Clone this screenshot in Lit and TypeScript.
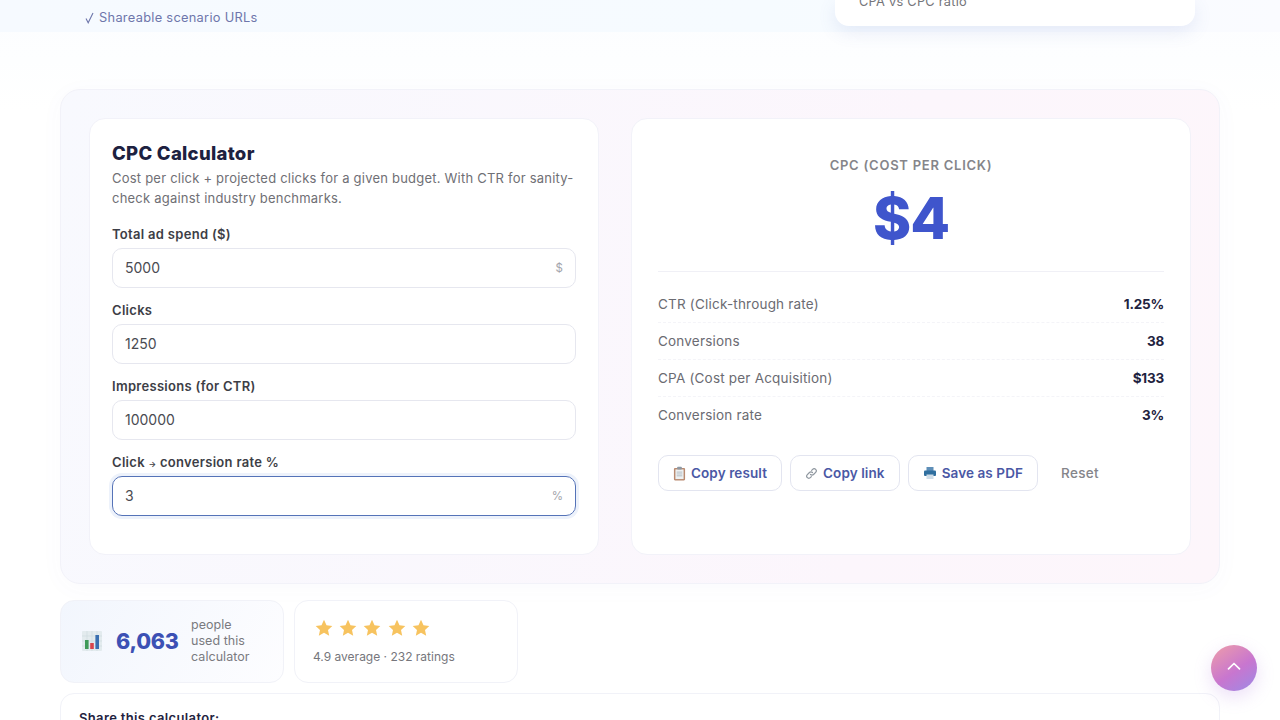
import { LitElement, html, css, svg } from "lit";
import { customElement } from "lit/decorators.js";

const clipboard = html`<svg class="ico" viewBox="0 0 14 16" width="13" height="15"><rect x="1" y="2" width="12" height="13.5" rx="1.2" fill="#b98a70"/><rect x="2.6" y="3.6" width="8.8" height="10.4" fill="#eef1f2"/><path d="M4 6.5h6M4 8.5h6M4 10.5h6" stroke="#a9b4bc" stroke-width=".9"/><rect x="4.5" y="0.6" width="5" height="3" rx=".8" fill="#8d98a2"/></svg>`;
const link = html`<svg class="ico" viewBox="0 0 16 16" width="13" height="13" fill="none" stroke="#8f979f" stroke-width="1.5" stroke-linecap="round"><path d="M6.8 9.2a2.6 2.6 0 0 0 3.7 0l2.6-2.6a2.6 2.6 0 0 0-3.7-3.7L8.2 4.1"/><path d="M9.2 6.8a2.6 2.6 0 0 0-3.7 0L2.9 9.4a2.6 2.6 0 0 0 3.7 3.7l1.2-1.2"/></svg>`;
const printer = html`<svg class="ico" viewBox="0 0 14 14" width="14" height="14"><rect x="3.5" y="1" width="7" height="4" fill="#5f8fb8"/><rect x="1" y="4.5" width="12" height="5.5" rx="1" fill="#2f6f9f"/><rect x="3.5" y="8.5" width="7" height="4.5" fill="#cfdde8"/></svg>`;
const chart = html`<svg viewBox="0 0 20 20" width="20" height="20"><rect width="20" height="20" rx="1" fill="#e3ebee"/><path d="M0 5h20M0 10h20M0 15h20M5 0v20M10 0v20M15 0v20" stroke="#cfdbe0" stroke-width=".7"/><rect x="3" y="9" width="3.6" height="9" fill="#3f9a58"/><rect x="8.2" y="12" width="3.6" height="6" fill="#d8454b"/><rect x="13.4" y="4" width="3.6" height="14" fill="#3a6fb0"/></svg>`;
const starPath = svg`<path d="M9 0.8l2.5 5.4 5.8.7-4.3 4 1.2 5.8L9 13.8 3.8 16.7 5 10.9.7 6.9l5.8-.7z" fill="#f7c35f"/>`;
const star = html`<svg viewBox="0 0 18 18" width="18" height="18">${starPath}</svg>`;
const chevron = html`<svg viewBox="0 0 14 8" width="14" height="8" fill="none" stroke="#fff" stroke-width="1.7" stroke-linecap="round" stroke-linejoin="round"><path d="M1.5 6.8L7 1.5l5.5 5.3"/></svg>`;
const tickMark = html`<svg class="tm" viewBox="0 0 9 12" width="9" height="12" fill="none" stroke="#6e76ab" stroke-width="1.1"><path d="M1 6.4L3.2 10.8L8 1"/></svg>`;

@customElement("app-root")
export class AppRoot extends LitElement {
  static styles = css`
    :host {
      display: block;
      width: 1280px;
      height: 720px;
      overflow: hidden;
      position: relative;
      background: linear-gradient(180deg, #fcfdff 0, #fdfeff 60px, #fff 110px);
      font-family: "Inter", "Noto Sans", sans-serif;
      color: #1f2340;
    }
    .hero {
      height: 32px;
      background: linear-gradient(90deg, #f6faff, #f6fbff 60%, #fafbff);
      display: flex;
      justify-content: space-between;
      padding: 0 85px;
      box-sizing: border-box;
    }
    .tick {
      margin-top: 9px;
      height: 17px;
      display: flex;
      align-items: center;
      gap: 5px;
      font-size: 12.8px;
      line-height: 17px;
      letter-spacing: 0.3px;
      color: #6e76ab;
    }
    .tm { display: block; flex: none; }
    .mini {
      width: 360px;
      height: 26px;
      box-sizing: border-box;
      background: #fff;
      border-radius: 0 0 14px 14px;
      box-shadow: 0 6px 18px rgba(80, 110, 190, 0.12);
      padding-left: 24px;
      overflow: hidden;
      font-size: 12.8px;
      line-height: 17px;
      letter-spacing: 0.25px;
      color: #75757a;
      display: flex;
      align-items: flex-end;
      padding-bottom: 16px;
    }
    .mini span { display: block; }
    .shell {
      margin: 57px 60px 0;
      height: 495px;
      box-sizing: border-box;
      border: 1px solid #f2f2f9;
      border-radius: 20px;
      background: linear-gradient(100deg, #f8f9fe, #fcf6fc 70%, #fdf6fb);
      box-shadow: 0 4px 24px rgba(80, 90, 190, 0.03);
      padding: 28px;
      display: grid;
      grid-template-columns: 510px 560px;
      gap: 32px;
    }
    .card {
      background: #fff;
      border: 1px solid #f2f2f9;
      border-radius: 16px;
      box-sizing: border-box;
      height: 437px;
    }
    .form { padding: 23px 22px; }
    h2 {
      margin: 0;
      font-size: 18.5px;
      line-height: 23px;
      font-weight: 800;
      letter-spacing: 0.3px;
      color: #1d2140;
    }
    .desc {
      margin: 0 0 16px;
      padding-top: 3px;
      font-size: 13px;
      line-height: 20px;
      color: #6f6f75;
      letter-spacing: 0.22px;
    }
    .field { display: flex; flex-direction: column; height: 76px; }
    label {
      height: 20px;
      font-size: 13px;
      line-height: 20px;
      font-weight: 600;
      letter-spacing: 0.3px;
      color: #3d3e46;
      margin-bottom: 4px;
    }
    .arrow { font-size: 8px; line-height: 1; }
    .input {
      height: 40px;
      box-sizing: border-box;
      border: 1px solid #e6e7ef;
      border-radius: 10px;
      display: flex;
      align-items: center;
      justify-content: space-between;
      padding: 0 12px;
      font-size: 14px;
      color: #4a4b52;
    }
    .input span { position: relative; top: -0.5px; }
    .input i { font-style: normal; font-size: 11.5px; color: #a3a4ab; }
    .input.focus {
      border-color: #5573b8;
      box-shadow: 0 0 0 3px #edf2fb;
    }
    .result { padding: 37px 26px 0; }
    .cap {
      text-align: center;
      font-size: 13px;
      line-height: 18px;
      font-weight: 600;
      letter-spacing: 0.75px;
      color: #85858a;
    }
    .big {
      text-align: center;
      margin-top: 10px;
      font-size: 58px;
      line-height: 68px;
      font-weight: 800;
      letter-spacing: -1px;
      color: #3f55cc;
    }
    .rows {
      margin-top: 19px;
      border-top: 1px solid #f0f0f6;
      padding-top: 14px;
    }
    .row {
      height: 37px;
      box-sizing: border-box;
      display: flex;
      justify-content: space-between;
      align-items: center;
      font-size: 13.5px;
      letter-spacing: 0.2px;
      color: #6b6b72;
      border-bottom: 1px dashed #f4f4f8;
    }
    .row:last-child { border-bottom: 0; padding-bottom: 1px; }
    .row b {
      font-weight: 700;
      color: #1f2340;
      font-size: 13.5px;
      letter-spacing: -0.2px;
    }
    .btns {
      margin-top: 21px;
      display: flex;
      gap: 8px;
      align-items: center;
    }
    .btn {
      height: 36px;
      box-sizing: border-box;
      border: 1px solid #e3e5f0;
      border-radius: 10px;
      background: #fff;
      padding: 0 14px;
      display: flex;
      align-items: center;
      gap: 5px;
      font-size: 13.5px;
      font-weight: 600;
      letter-spacing: 0.1px;
      color: #4a58a5;
    }
    .reset {
      margin-left: 15px;
      font-size: 13.5px;
      font-weight: 500;
      letter-spacing: 0.3px;
      color: #85858a;
    }
    .ico { display: block; flex: none; }
    .stats {
      margin: 16px 60px 0;
      display: flex;
      gap: 10px;
    }
    .stat {
      width: 224px;
      height: 83px;
      box-sizing: border-box;
      border: 1px solid #f1f2f8;
      border-radius: 14px;
      background: #fff;
    }
    .count {
      background: linear-gradient(120deg, #f2f6fd, #fdfdff);
      display: flex;
      align-items: center;
      padding: 0 0 2px 21px;
    }
    .num {
      margin-left: 14px;
      font-size: 21.5px;
      font-weight: 800;
      color: #3c50b4;
      letter-spacing: -0.2px;
      width: 75px;
    }
    .people {
      font-size: 12.5px;
      line-height: 16px;
      letter-spacing: 0.05px;
      color: #7a7a80;
    }
    .rate { padding: 18px 18px 0; }
    .stars { display: flex; gap: 6.2px; height: 18px; margin-left: 2px; }
    .rate p {
      margin: 12px 0 0;
      font-size: 12px;
      line-height: 16px;
      color: #76767c;
    }
    .share {
      margin: 10px 60px 0;
      height: 60px;
      box-sizing: border-box;
      border: 1px solid #f1f2f8;
      border-radius: 14px;
      padding: 15px 18px;
      font-size: 13px;
      font-weight: 600;
      letter-spacing: 0.35px;
      line-height: 18px;
      color: #1f2340;
    }
    .top {
      position: absolute;
      left: 1211px;
      top: 645px;
      width: 46px;
      height: 46px;
      border-radius: 50%;
      background: linear-gradient(145deg, #ef9ea8, #c876cf 55%, #9c8ae6);
      box-shadow: 0 6px 18px rgba(170, 110, 220, 0.22);
      display: flex;
      align-items: center;
      justify-content: center;
      padding-bottom: 5px;
      box-sizing: border-box;
    }
  `;

  private field(label: unknown, value: string, unit = "", focus = false) {
    return html`<div class="field">
      <label>${label}</label>
      <div class="input ${focus ? "focus" : ""}"><span>${value}</span>${unit ? html`<i>${unit}</i>` : ""}</div>
    </div>`;
  }

  private row(k: string, v: string) {
    return html`<div class="row"><span>${k}</span><b>${v}</b></div>`;
  }

  render() {
    return html`
      <div class="hero">
        <div class="tick">${tickMark}<span>Shareable scenario URLs</span></div>
        <div class="mini"><span>CPA vs CPC ratio</span></div>
      </div>
      <div class="shell">
        <section class="card form">
          <h2>CPC Calculator</h2>
          <p class="desc">Cost per click + projected clicks for a given budget. With CTR for sanity-check against industry benchmarks.</p>
          ${this.field("Total ad spend ($)", "5000", "$")}
          ${this.field("Clicks", "1250")}
          ${this.field("Impressions (for CTR)", "100000")}
          ${this.field(html`Click <span class="arrow">→</span> conversion rate %`, "3", "%", true)}
        </section>
        <section class="card result">
          <div class="cap">CPC (COST PER CLICK)</div>
          <div class="big">$4</div>
          <div class="rows">
            ${this.row("CTR (Click-through rate)", "1.25%")}
            ${this.row("Conversions", "38")}
            ${this.row("CPA (Cost per Acquisition)", "$133")}
            ${this.row("Conversion rate", "3%")}
          </div>
          <div class="btns">
            <div class="btn">${clipboard}<span>Copy result</span></div>
            <div class="btn">${link}<span>Copy link</span></div>
            <div class="btn">${printer}<span>Save as PDF</span></div>
            <div class="reset">Reset</div>
          </div>
        </section>
      </div>
      <div class="stats">
        <div class="stat count">
          ${chart}
          <div class="num">6,063</div>
          <div class="people">people<br />used this<br />calculator</div>
        </div>
        <div class="stat rate">
          <div class="stars">${star}${star}${star}${star}${star}</div>
          <p>4.9 average · 232 ratings</p>
        </div>
      </div>
      <div class="share">Share this calculator:</div>
      <div class="top">${chevron}</div>
    `;
  }
}
